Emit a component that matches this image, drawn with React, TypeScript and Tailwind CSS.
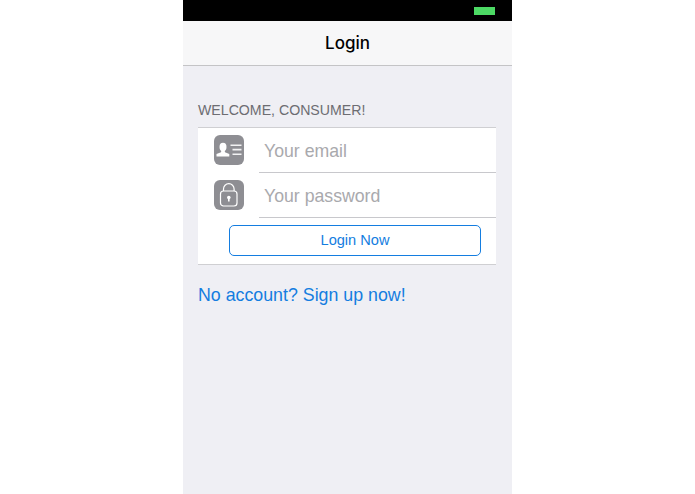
import React from 'react';

const ContactIcon = () => (
  <svg width="30" height="30" viewBox="0 0 30 30" className="block">
    <rect width="30" height="30" rx="6" fill="#8e8e93" />
    <ellipse cx="9" cy="12" rx="3.500" ry="4.200" fill="#fff" />
    <path d="M7.500 15h3l.5 2.300 4.300 1.700v2.500H2.500V19l4.500-1.700z" fill="#fff" />
    <path d="M16.500 9.500h11v1.600h-11zM18.500 13.800h9v1.600h-9zM18.500 18.500h9v1.600h-9z" fill="#f2f2f3" />
  </svg>
);

const LockIcon = () => (
  <svg width="30" height="30" viewBox="0 0 30 30" className="block">
    <rect width="30" height="30" rx="6" fill="#8e8e93" />
    <path d="M9.500 11V9a5.300 5.300 0 0 1 10.600 0v2" fill="none" stroke="#fff" strokeWidth="1.200" />
    <rect x="6.500" y="11" width="16.500" height="15" rx="3" fill="none" stroke="#fff" strokeWidth="1.200" />
    <circle cx="14.800" cy="17.500" r="1.800" fill="#fff" />
    <rect x="14" y="17.500" width="1.600" height="4" fill="#fff" />
  </svg>
);

const FieldRow = ({ icon, placeholder }: { icon: React.ReactNode; placeholder: string }) => (
  <div className="flex h-[45px]">
    <div className="w-[61px] flex pt-[7px] pl-[16px]">{icon}</div>
    <div className="flex-1 border-b border-[#c8c8cc] flex items-center pl-[5px] pt-[2px] text-[17.7px] text-[#a9a9ad]">
      {placeholder}
    </div>
  </div>
);

export default function App() {
  return (
    <div className="w-[695px] h-[494px] bg-white flex justify-center font-['Liberation_Sans',sans-serif]">
      <div className="w-[329px] h-full bg-[#efeff4] flex flex-col">
        <div className="h-[21px] bg-black flex justify-end items-center pr-[17px]">
          <div className="w-[21px] h-[8px] bg-[#4cd964]"></div>
        </div>
        <div className="h-[45px] bg-[#f7f7f8] border-b border-[#c4c4c6] flex items-center justify-center pt-[1px] text-[17px] font-medium font-['Inter',sans-serif] text-black">
          Login
        </div>
        <div className="pl-[15px] pr-[16px] pt-[36px]">
          <div className="text-[14.15px] leading-[17px] text-[#6d6d72] mb-[8px]">WELCOME, CONSUMER!</div>
          <div className="bg-white border-t border-b border-[#cfcfd2]">
            <FieldRow icon={<ContactIcon />} placeholder="Your email" />
            <FieldRow icon={<LockIcon />} placeholder="Your password" />
            <div className="h-[46px] pl-[31px] pr-[15px] pt-[7px]">
              <div className="h-[31px] border-[1.5px] border-[#147de0] rounded-[5px] flex items-center justify-center text-[14.6px] text-[#147de0]">
                Login Now
              </div>
            </div>
          </div>
          <div className="mt-[19px] text-[17.8px] leading-[22px] text-[#147de0]">No account? Sign up now!</div>
        </div>
      </div>
    </div>
  );
}
